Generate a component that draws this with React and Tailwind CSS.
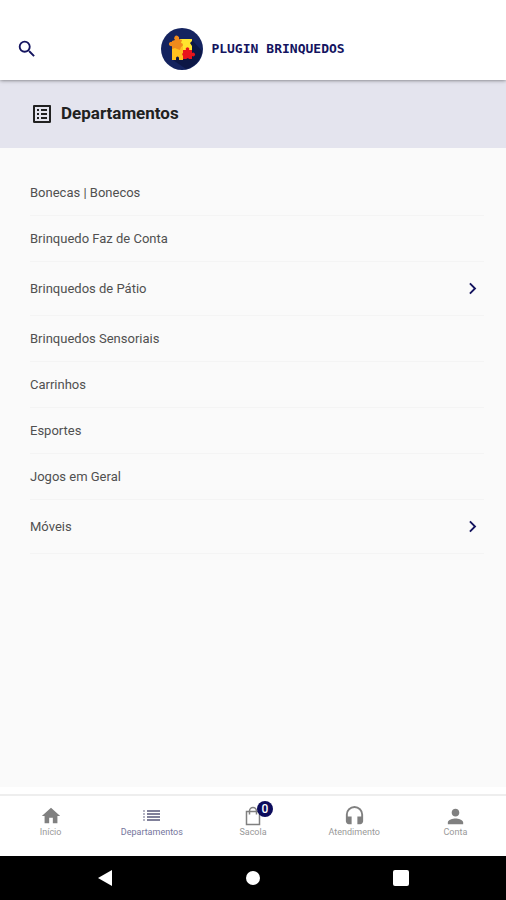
import {
  MdChevronRight,
  MdHeadset,
  MdHome,
  MdOutlineListAlt,
  MdPerson,
  MdSearch,
} from "react-icons/md";

const departments = [
  { name: "Bonecas | Bonecos" },
  { name: "Brinquedo Faz de Conta" },
  { name: "Brinquedos de Pátio", hasChildren: true },
  { name: "Brinquedos Sensoriais" },
  { name: "Carrinhos" },
  { name: "Esportes" },
  { name: "Jogos em Geral" },
  { name: "Móveis", hasChildren: true },
];

const tabs = [
  { label: "Início", icon: <MdHome size={22} /> },
  { label: "Departamentos", icon: <ListIcon />, active: true },
  { label: "Sacola", icon: <BagIcon />, badge: 0 },
  { label: "Atendimento", icon: <MdHeadset size={23} /> },
  { label: "Conta", icon: <MdPerson size={23} /> },
];

function ListIcon() {
  return (
    <svg width="18" height="12" viewBox="0 0 18 12" fill="currentColor">
      <path d="M0 0h2v2H0zM0 3h2v2H0zM0 6h2v2H0zM0 9h2v2H0z" opacity="0.6" />
      <path d="M4 0h13v2H4zM4 3h13v2H4zM4 6h13v2H4zM4 9h13v2H4z" />
    </svg>
  );
}

function BagIcon() {
  return (
    <svg width="16" height="20" viewBox="0 0 16 20" fill="none" stroke="currentColor" strokeWidth="1.5">
      <path d="M1.5 5.500h13v13h-13z" />
      <path d="M4.500 8.500V5a3.500 3.500 0 0 1 7 0v3.500" />
    </svg>
  );
}

function Logo() {
  return (
    <a href="#inicio" className="flex items-center gap-2 text-[#14145f]">
      <svg width="42" height="42" viewBox="0 0 42 42" aria-hidden="true">
        <circle cx="21" cy="21" r="21" fill="#14235f" />
        <path d="M12 32 31 12l10 11a21 21 0 0 1-16 18z" fill="#0c1745" />
        <path d="M19 11h12v2l-2 2 2 3v5H19z" fill="#ffe52e" />
        <path d="M11 19h11v13h-4v-2a1.500 1.500 0 0 0-3 0v2h-4z" fill="#ffc21f" />
        <path
          d="M11 13l3-1a2.500 2.500 0 1 1 4-1l3 1-1 3a2 2 0 1 1 0 4l-1 3-3-1-2-1-3 1 0-3a2.200 2.200 0 1 1 0-4z"
          fill="#f08a1c"
        />
        <path
          d="M22 22h3a1.800 1.800 0 1 1 3 0h3v3a1.900 1.900 0 1 1 0 3v3h-3l-1-1-2 1h-3v-3l-1-2 1-1z"
          fill="#e8141c"
        />
      </svg>
      <span className="flex gap-2 font-['DejaVu_Sans_Mono',monospace] text-[13px] font-bold">
        <span>PLUGIN</span>
        <span>BRINQUEDOS</span>
      </span>
    </a>
  );
}

export default function App() {
  return (
    <div className="flex min-h-screen flex-col bg-[#fafafa] font-[Roboto,sans-serif]">
      <header className="relative grid h-20 grid-cols-[1fr_auto_1fr] items-center bg-white px-4 pt-[18px] shadow-[0_0_4px_rgba(0,0,0,0.6)]">
        <button type="button" aria-label="Buscar" className="justify-self-start text-[#14145f]">
          <MdSearch size={22} />
        </button>
        <Logo />
      </header>

      <div className="flex h-[68px] items-center gap-[7px] bg-[#e4e4ee] px-[30px] text-[#212121]">
        <MdOutlineListAlt size={24} />
        <h1 className="text-[17px] font-bold">Departamentos</h1>
      </div>

      <main className="flex-1 pt-[22px] pr-[22px] pl-[30px]">
        <ul>
          {departments.map((department) => (
            <li key={department.name} className="border-b border-[#f4f4f4]">
              <a
                href="#departamento"
                className="flex items-center justify-between py-[15px] text-[13px] leading-[15px] text-[#505050]"
              >
                {department.name}
                {department.hasChildren && (
                  <MdChevronRight size={23} className="text-[#14145f]" />
                )}
              </a>
            </li>
          ))}
        </ul>
      </main>

      <div className="border-b-2 border-[#eee] bg-white pt-[7px]" />
      <nav className="grid h-[60px] grid-cols-5 bg-white pt-[9px]">
        {tabs.map((tab) => (
          <a
            key={tab.label}
            href="#tab"
            className={`flex flex-col items-center text-[9px] leading-[10px] ${
              tab.active ? "text-[#75759c]" : "text-[#999]"
            }`}
          >
            <span
              className={`relative flex h-[22px] items-center ${
                tab.active ? "text-[#80809a]" : "text-[#808080]"
              }`}
            >
              {tab.icon}
              {tab.badge !== undefined && (
                <span className="absolute -top-1 left-3 flex size-4 items-center justify-center rounded-full bg-[#0c0c5c] text-[12px] font-medium text-white">
                  {tab.badge}
                </span>
              )}
            </span>
            {tab.label}
          </a>
        ))}
      </nav>

      {/* Android navigation bar */}
      <div className="flex h-[44px] items-center justify-center gap-[132px] bg-black text-white">
        <button type="button" aria-label="Voltar">
          <svg width="16" height="16" viewBox="0 0 16 16" fill="currentColor">
            <path d="M15 0v16L1 8z" />
          </svg>
        </button>
        <button type="button" aria-label="Tela inicial">
          <svg width="16" height="16" viewBox="0 0 16 16" fill="currentColor">
            <circle cx="8" cy="8" r="7" />
          </svg>
        </button>
        <button type="button" aria-label="Recentes">
          <svg width="16" height="16" viewBox="0 0 16 16" fill="currentColor">
            <rect width="16" height="16" rx="2" />
          </svg>
        </button>
      </div>
    </div>
  );
}
